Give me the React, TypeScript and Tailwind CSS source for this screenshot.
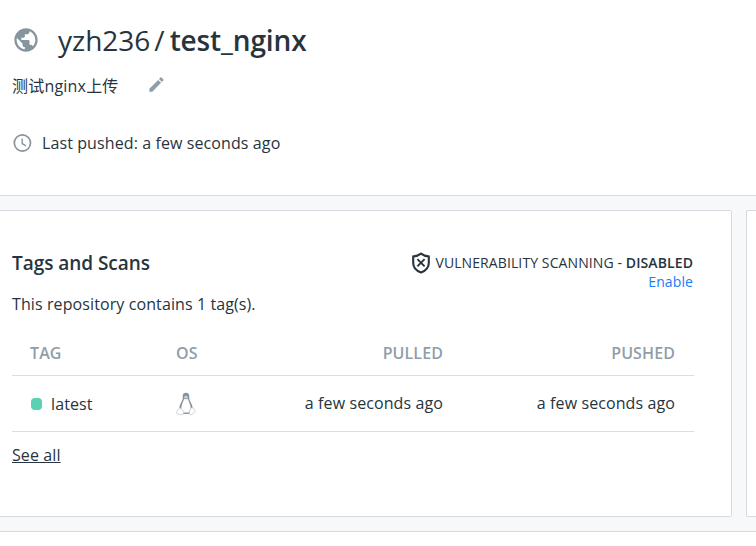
import React from 'react';

const Globe = () => (
  <svg viewBox="0 0 24 24" className="h-7 w-7 shrink-0" fill="#8495a0">
    <path d="M12 2C6.48 2 2 6.48 2 12s4.48 10 10 10 10-4.480 10-10S17.520 2 12 2zm-1 17.930c-3.950-.49-7-3.850-7-7.930 0-.62.080-1.210.210-1.790L9 15v1c0 1.100.9 2 2 2v1.930zm6.900-2.540c-.26-.81-1-1.390-1.900-1.390h-1v-3c0-.55-.45-1-1-1H8v-2h2c.55 0 1-.45 1-1V7h2c1.100 0 2-.9 2-2v-.41c2.930 1.190 5 4.060 5 7.410 0 2.080-.8 3.970-2.100 5.390z" />
  </svg>
);

const Pencil = () => (
  <svg viewBox="0 0 24 24" className="h-[19px] w-[19px] shrink-0" fill="#8f9ea8">
    <path d="M3 17.250V21h3.750L17.810 9.940l-3.750-3.750L3 17.250zM20.710 7.040a1 1 0 0 0 0-1.410l-2.340-2.340a1 1 0 0 0-1.410 0l-1.830 1.830 3.750 3.750 1.830-1.830z" />
  </svg>
);

const Clock = () => (
  <svg viewBox="0 0 20 20" className="h-5 w-5 shrink-0" fill="none" stroke="#8495a0">
    <circle cx="10.400" cy="10" r="8.100" strokeWidth="1.700" />
    <path d="M10.200 5.500v5l3.800 2.400" strokeWidth="1.400" />
  </svg>
);

const Shield = () => (
  <svg viewBox="0 0 20 22" className="mt-px h-[22px] w-5 shrink-0" fill="none" stroke="#27343d">
    <path d="M10 1.600C8 3.200 5 4.200 2.200 4.400V11c0 4.500 3.200 7.800 7.800 9.500 4.600-1.700 7.800-5 7.800-9.500V4.400C15 4.200 12 3.200 10 1.600z" strokeWidth="2.100" strokeLinejoin="round" />
    <path d="M6.400 7.200l7.200 7.200M13.600 7.200l-7.200 7.200" strokeWidth="1.900" />
  </svg>
);

const Tux = () => (
  <svg viewBox="0 0 20 24" className="mt-px h-6 w-5 shrink-0">
    <path d="M10 .8C7.600.8 6.500 2.400 6.700 4.700c.2 2.800-.6 3.900-1.700 6-.9 1.700-1.600 3.400-1.700 5.600L6 21.500h8l2.700-5.200c-.1-2.200-.9-4-1.800-5.600-1.100-2-1.700-3.200-1.600-6C13.400 2.400 12.400.8 10 .8z" fill="#8495a0" />
    <path d="M8.100 6.700c1.200.8 2.600.8 3.800 0 .2 2 2.700 5.300 2.800 9.500L13 20.500H7l-1.700-4.300C5.400 12 7.900 8.500 8.100 6.700z" fill="#fff" />
    <path d="M8.200 4.600l1.800-.9 1.800.9v1.200l-1.800 1-1.800-1z" fill="#c9d1d6" />
    <path d="M3.700 15.800c1.500 0 2.800 2.400 3.900 4.200.7 1.300-.2 2.700-1.700 2.700-1.300 0-3.100-.8-4.500-1-.9-.2-.6-1.200-.5-2.300.1-1.300.7-1.100 1.600-1.600.5-.4.400-2 1.200-2zM16.300 15.800c-1.500 0-2.200 1-2.500 2.500-.2 1.600-.7 2.700-.2 3.700.6 1.100 1.800.8 2.700 0 .8-.8 1.900-1.300 2.900-1.900.6-.4.200-.9-.5-1.600-.7-.6-.3-2.700-2.400-2.700z" fill="#fff" stroke="#b9c3c9" strokeWidth=".7" />
    <path d="M7.300 21.500h6" stroke="#8495a0" strokeWidth=".8" />
  </svg>
);

export default function App() {
  return (
    <div className="flex h-[546px] w-[756px] flex-col overflow-hidden bg-white font-['Open_Sans','Noto_Sans_CJK_SC',sans-serif] text-[16px] leading-6 tracking-[0.1px] text-[#27343d]">
      <header className="h-[196px] shrink-0 border-b border-[#d6dade] pl-3 pt-5">
        <div className="flex h-10 items-center">
          <Globe />
          <h1 className="ml-[18px] whitespace-pre text-[28px] leading-10 tracking-normal">
            yzh236<span className="ml-1 mr-[5px]">/</span><span className="font-semibold tracking-[-0.13px]">test_nginx</span>
          </h1>
        </div>
        <div className="mt-[14px] flex h-6 items-center">
          <span className="w-[135px] tracking-[0.2px]">测试nginx上传</span>
          <div className="-mt-1"><Pencil /></div>
        </div>
        <div className="mt-[33px] flex h-6 items-center">
          <Clock />
          <span className="ml-[10px]">Last pushed: a few seconds ago</span>
        </div>
      </header>

      <main className="flex h-[336px] shrink-0 border-b border-[#d6dade] bg-[#f7f8fa] py-[14px]">
        <section className="h-[307px] w-[732px] shrink-0 rounded-r-[2px] border-y border-r border-[#d6dade] bg-white pl-3 pr-[38px] pt-10">
          <div className="flex justify-between">
            <h2 className="text-[19px] font-semibold leading-6 tracking-[-0.05px]">Tags and Scans</h2>
            <div className="text-right text-[14px] leading-[19px]">
              <div className="flex h-[22px] items-center">
                <Shield />
                <span className="ml-1">VULNERABILITY SCANNING - <span className="font-semibold">DISABLED</span></span>
              </div>
              <a className="-mt-px block text-[#1a7cf9]">Enable</a>
            </div>
          </div>
          <p className="mt-px leading-6">This repository contains 1 tag(s).</p>
          <table className="mt-[13px] w-[682px] table-fixed border-collapse">
            <thead>
              <tr className="h-[46px] border-b border-[#dcdfe2] text-[#8f9ea8]">
                <th className="w-[146px] p-0 pl-[18px] pt-0.5 text-left font-semibold">TAG</th>
                <th className="w-[90px] p-0 pl-[18px] pt-0.5 text-left font-semibold">OS</th>
                <th className="p-0 pr-[19px] pt-0.5 text-right font-semibold">PULLED</th>
                <th className="w-[232px] p-0 pr-[19px] pt-0.5 text-right font-semibold">PUSHED</th>
              </tr>
            </thead>
            <tbody>
              <tr className="h-14 border-b border-[#dcdfe2]">
                <td className="p-0 pl-[19px] pt-px">
                  <div className="flex items-center">
                    <span className="mr-[9px] h-3 w-[11px] rounded-[4px] bg-[#58d2b3]" />
                    latest
                  </div>
                </td>
                <td className="p-0 pl-[18px]"><Tux /></td>
                <td className="p-0 pr-[19px] text-right">a few seconds ago</td>
                <td className="p-0 pr-[19px] text-right">a few seconds ago</td>
              </tr>
            </tbody>
          </table>
          <a className="mt-[11px] inline-block underline">See all</a>
        </section>
        <section className="ml-[14px] h-[307px] flex-1 rounded-l-[2px] border-y border-l border-[#d6dade] bg-white" />
      </main>
    </div>
  );
}
